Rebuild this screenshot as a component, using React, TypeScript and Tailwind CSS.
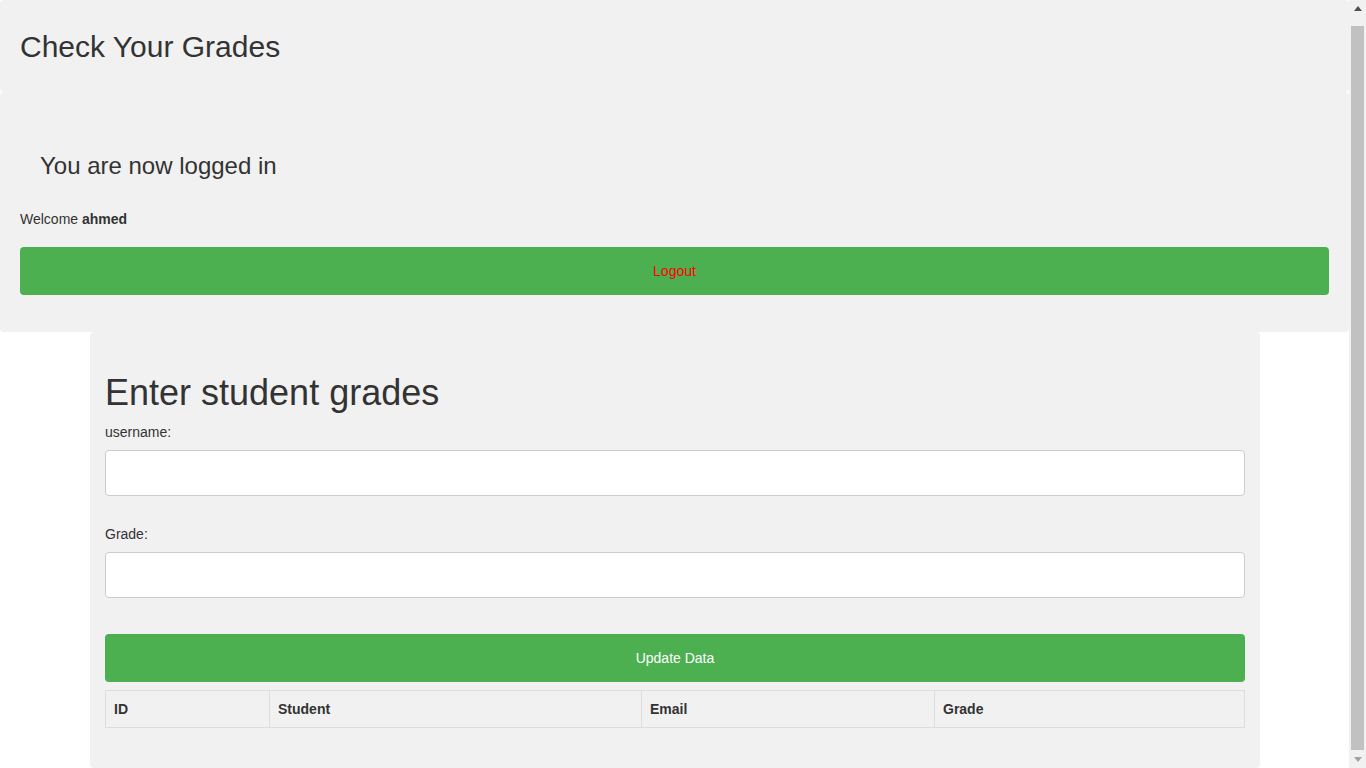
export default function App() {
  const cols = [
    { label: "ID", w: "w-[164px]" },
    { label: "Student", w: "w-[372px]" },
    { label: "Email", w: "w-[293px]" },
    { label: "Grade", w: "" },
  ];

  return (
    <div className="flex h-screen overflow-hidden bg-white text-[#333] font-['Liberation_Sans',Arial,sans-serif] text-sm">
      <div className="flex-1 flex flex-col">
        {/* header */}
        <div className="h-[92px] shrink-0 bg-[#f1f1f1] rounded flex items-center px-5">
          <h1 className="text-[30px] leading-[33px]">Check Your Grades</h1>
        </div>

        {/* login box */}
        <div className="h-[240px] shrink-0 bg-[#f1f1f1] rounded px-5 pt-[61px]">
          <h3 className="text-2xl leading-[26px] px-5">You are now logged in</h3>
          <p className="mt-[30px] leading-5">
            Welcome <b>ahmed</b>
          </p>
          <button className="mt-[18px] w-full h-12 rounded bg-[#4caf50] text-[#ff0000]">Logout</button>
        </div>

        {/* grades form */}
        <div className="flex-1 flex pl-[90px]">
          <div className="w-[1170px] bg-[#f1f1f1] rounded px-[15px] pt-[41px]">
            <h1 className="text-[36px] leading-[40px]">Enter student grades</h1>
            <label className="block mt-[9px] leading-5">username:</label>
            <input className="block mt-2 w-full h-[46px] bg-white border border-[#ccc] rounded px-3" />
            <label className="block mt-7 leading-5">Grade:</label>
            <input className="block mt-2 w-full h-[46px] bg-white border border-[#ccc] rounded px-3" />
            <button className="block mt-9 w-full h-12 rounded bg-[#4caf50] text-white">Update Data</button>
            <table className="mt-2 w-full border-collapse">
              <thead>
                <tr>
                  {cols.map((c) => (
                    <th
                      key={c.label}
                      className={`${c.w} border border-[#ddd] px-2 h-[37px] pb-[1px] text-left font-bold leading-5`}
                    >
                      {c.label}
                    </th>
                  ))}
                </tr>
              </thead>
            </table>
          </div>
        </div>
      </div>

      {/* scrollbar */}
      <div className="w-[17px] shrink-0 bg-[#f1f1f1] flex flex-col items-center">
        <div className="h-[17px] flex items-center justify-center">
          <svg width="8" height="5" viewBox="0 0 8 5">
            <path d="M0 5 L4 0 L8 5 Z" fill="#505050" />
          </svg>
        </div>
        <div className="mt-[9px] h-[724px] w-[13px] bg-[#c1c1c1]" />
        <div className="flex-1" />
        <div className="h-[17px] flex items-center justify-center">
          <svg width="8" height="5" viewBox="0 0 8 5">
            <path d="M0 0 L4 5 L8 0 Z" fill="#a3a3a3" />
          </svg>
        </div>
      </div>
    </div>
  );
}
